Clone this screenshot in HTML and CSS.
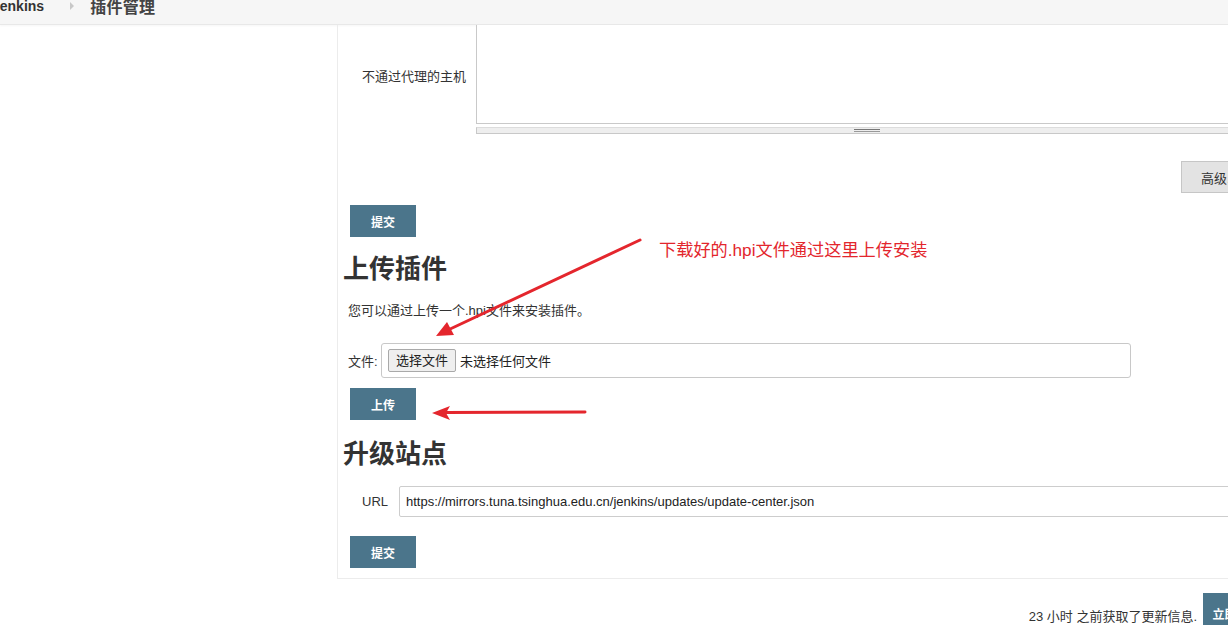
FILE: index.html
```html
<!DOCTYPE html>
<html lang="zh-CN">
<head>
<meta charset="utf-8">
<title>插件管理 [Jenkins]</title>
<link rel="stylesheet" href="styles.css">
</head>
<body>
<div class="page">
  <header class="topbar">
    <div class="crumbs">
      <span class="brand">Jenkins</span>
      <span class="sep"></span>
      <span class="crumb">插件管理</span>
    </div>
  </header>
  <div class="layout">
    <aside class="sidebar"></aside>
    <main class="panel">
      <div class="proxy-row">
        <label class="proxy-label">不通过代理的主机</label>
        <div class="textarea"></div>
      </div>
      <div class="grip"><span class="grip-handle"></span></div>
      <div class="adv-row"><button class="adv-btn">高级...</button></div>
      <button class="submit">提交</button>

      <h1 class="section-title first">上传插件</h1>
      <p class="desc">您可以通过上传一个.hpi文件来安装插件。</p>
      <div class="file-row">
        <span class="file-label">文件:</span>
        <div class="file-box">
          <span class="file-btn">选择文件</span>
          <span class="file-none">未选择任何文件</span>
        </div>
      </div>
      <button class="submit upload">上传</button>

      <h1 class="section-title second">升级站点</h1>
      <div class="url-row">
        <span class="url-label">URL</span>
        <div class="url-input">https://mirrors.tuna.tsinghua.edu.cn/jenkins/updates/update-center.json</div>
      </div>
      <button class="submit last">提交</button>
    </main>
  </div>
  <footer class="footer">
    <span class="footer-text">23 小时 之前获取了更新信息.</span>
    <button class="footer-btn">立即获取</button>
  </footer>

  <div class="annotation">下载好的.hpi文件通过这里上传安装</div>
  <svg class="arrows" width="1228" height="625" viewBox="0 0 1228 625" xmlns="http://www.w3.org/2000/svg">
    <line x1="640" y1="240" x2="448" y2="330" stroke="#e4262d" stroke-width="3" stroke-linecap="round"/>
    <polygon points="436,336 454,335 447,322" fill="#e4262d"/>
    <line x1="585" y1="412" x2="446" y2="412.5" stroke="#e4262d" stroke-width="3" stroke-linecap="round"/>
    <polygon points="432,413 450,406 446,413 450,420" fill="#e4262d"/>
  </svg>
</div>
</body>
</html>
```

FILE: styles.css
```css
html, body {
  margin: 0;
  padding: 0;
  overflow: hidden;
  background: #fff;
}

body {
  font-family: "Liberation Sans", "Noto Sans CJK SC", sans-serif;
  color: #333;
  font-size: 13px;
}

.page {
  position: relative;
  width: 1270px;
  height: 625px;
}

.topbar {
  height: 24px;
  background: #f6f6f6;
  border-bottom: 1px solid #e8e8e8;
  box-shadow: 0 1px 2px rgba(0,0,0,0.04);
  overflow: hidden;
}

.crumbs {
  display: flex;
  align-items: center;
  height: 20px;
  margin-top: -4px;
}

.brand {
  margin-left: -8px;
  font-weight: bold;
  font-size: 14px;
  color: #333;
}

.sep {
  width: 0;
  height: 0;
  margin-left: 26px;
  margin-right: 16px;
  border-left: 4px solid #c8c8c8;
  border-top: 4px solid transparent;
  border-bottom: 4px solid transparent;
}

.crumb {
  font-size: 16px;
  font-weight: bold;
  color: #444;
  letter-spacing: 0.3px;
}

.layout {
  display: flex;
}

.sidebar {
  width: 337px;
  flex: none;
}

.panel {
  flex: 1;
  border-left: 1px solid #ececec;
  border-bottom: 1px solid #ececec;
  padding: 0 12px 10px 0;
  display: flex;
  flex-direction: column;
  align-items: flex-start;
}

.proxy-row {
  display: flex;
  align-self: stretch;
  gap: 10px;
}

.proxy-label {
  width: 128px;
  text-align: right;
  padding-top: 42px;
  line-height: 20px;
  font-size: 13px;
  color: #333;
}

.textarea {
  flex: 1;
  height: 98px;
  border: 1px solid #c9c9c9;
  border-top: none;
  background: #fff;
}

.grip {
  align-self: stretch;
  margin-left: 138px;
  margin-top: 3px;
  height: 5px;
  background: #eeeeee;
  border: 1px solid #c8c8c8;
  border-top-color: #dcdcdc;
  display: flex;
  justify-content: center;
  align-items: center;
}

.grip-handle {
  width: 26px;
  height: 1px;
  border-top: 1px solid #777;
  border-bottom: 1px solid #999;
}

.adv-row {
  align-self: stretch;
  display: flex;
  justify-content: flex-end;
  margin-top: 27px;
}

.adv-btn {
  height: 32px;
  width: 77px;
  padding: 0 0 0 19px;
  text-align: left;
  border: 1px solid #c6c6c6;
  background: #e3e3e3;
  font-family: "Liberation Sans", "Noto Sans CJK SC", sans-serif;
  font-size: 13px;
  color: #333;
  white-space: nowrap;
}

.submit {
  margin-left: 12px;
  margin-top: 12px;
  width: 66px;
  height: 32px;
  background: #4b758b;
  border: none;
  color: #fff;
  font-family: "Liberation Sans", "Noto Sans CJK SC", sans-serif;
  font-weight: bold;
  font-size: 12px;
  padding: 0;
}

.section-title {
  margin: 17px 0 0 5px;
  font-size: 26px;
  line-height: 31px;
  font-weight: bold;
  color: #333;
}

.section-title.second {
  margin-top: 19px;
}

.desc {
  margin: 17px 0 0 10px;
  font-size: 13px;
  line-height: 18px;
  color: #333;
}

.file-row {
  display: flex;
  align-items: center;
  margin: 23px 0 0 10px;
}

.file-label {
  font-size: 13px;
  width: 33px;
}

.file-box {
  width: 742px;
  height: 33px;
  border: 1px solid #c8c8c8;
  border-radius: 3px;
  display: flex;
  align-items: center;
  padding-left: 6px;
  gap: 4px;
}

.file-btn {
  height: 21px;
  line-height: 21px;
  padding: 0 7px;
  background: #efefef;
  border: 1px solid #a9a9a9;
  border-radius: 2px;
  font-size: 13px;
  color: #222;
}

.file-none {
  font-size: 13px;
  color: #222;
}

.submit.upload {
  margin-top: 10px;
}

.url-row {
  display: flex;
  align-items: center;
  align-self: stretch;
  margin-top: 16px;
  padding-left: 24px;
  gap: 11px;
}

.url-label {
  font-size: 13px;
  width: 26px;
}

.url-input {
  flex: 1;
  height: 29px;
  line-height: 29px;
  border: 1px solid #cdcdcd;
  border-radius: 2px;
  padding-left: 6px;
  font-size: 13px;
  color: #222;
}

.submit.last {
  margin-top: 19px;
}

.footer {
  display: flex;
  justify-content: flex-end;
  align-items: flex-start;
  margin-top: 14px;
  width: 1270px;
}

.footer-text {
  margin-top: 15px;
  font-size: 13px;
  line-height: 18px;
  color: #333;
  margin-right: 6px;
}

.footer-btn {
  width: 67px;
  height: 40px;
  background: #4b758b;
  border: none;
  color: #fff;
  font-family: "Liberation Sans", "Noto Sans CJK SC", sans-serif;
  font-weight: bold;
  font-size: 12px;
  padding: 0;
}

.annotation {
  position: absolute;
  left: 659px;
  top: 239px;
  font-size: 17.2px;
  line-height: 22px;
  color: #e3262d;
  white-space: nowrap;
}

.arrows {
  position: absolute;
  left: 0;
  top: 0;
  pointer-events: none;
}
```
